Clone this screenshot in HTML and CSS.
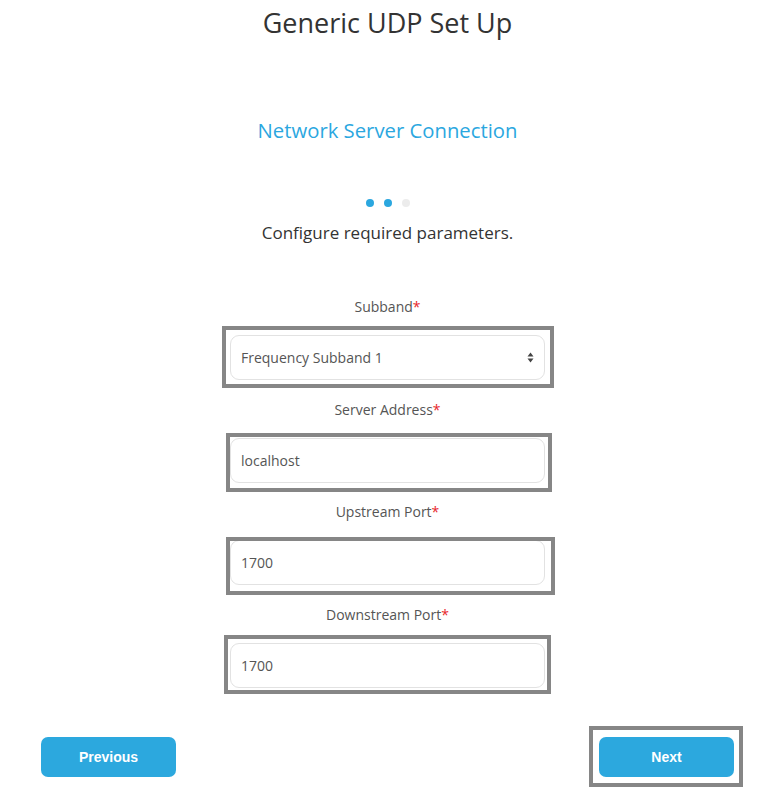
FILE: index.html
```html
<!DOCTYPE html>
<html>
<head>
<meta charset="utf-8">
<link rel="stylesheet" href="styles.css">
</head>
<body>
<div class="page">
  <h1 class="title">Generic UDP Set Up</h1>
  <h2 class="subtitle">Network Server Connection</h2>
  <div class="dots">
    <span class="dot on"></span>
    <span class="dot on"></span>
    <span class="dot"></span>
  </div>
  <p class="intro">Configure required parameters.</p>

  <form class="form">
    <div class="field">
      <label class="label">Subband<span class="req">*</span></label>
      <div class="select">
        <span>Frequency Subband 1</span>
        <svg class="arrows" width="7" height="11" viewBox="0 0 7 11"><path d="M3.5 0.5 L6.5 4.5 H0.5 Z M3.5 10.5 L6.5 6.5 H0.5 Z" fill="#444"/></svg>
      </div>
      <div class="hl hl-1"></div>
    </div>
    <div class="field">
      <label class="label">Server Address<span class="req">*</span></label>
      <div class="input">localhost</div>
      <div class="hl hl-2"></div>
    </div>
    <div class="field">
      <label class="label">Upstream Port<span class="req">*</span></label>
      <div class="input">1700</div>
      <div class="hl hl-3"></div>
    </div>
    <div class="field">
      <label class="label">Downstream Port<span class="req">*</span></label>
      <div class="input">1700</div>
      <div class="hl hl-4"></div>
    </div>
  </form>

  <div class="actions">
    <button class="btn" type="button">Previous</button>
    <div class="btn-wrap">
      <button class="btn" type="button">Next</button>
      <div class="hl hl-btn"></div>
    </div>
  </div>
</div>
</body>
</html>
```
FILE: styles.css
```css
* { box-sizing: border-box; }
html, body { margin: 0; padding: 0; background: #fff; }
body { font-family: "Segoe UI", "Open Sans", "Noto Sans", sans-serif; color: #333; min-height: 811px; }

.page {
  width: 755px;
  margin-left: 10px;
  padding-bottom: 20px;
  display: flex;
  flex-direction: column;
  align-items: center;
}

.title {
  margin: 0;
  padding-top: 3px;
  font-size: 27px;
  font-weight: 400;
  line-height: 40px;
  color: #333;
}

.subtitle {
  margin: 72px 0 0;
  font-size: 20.3px;
  font-weight: 400;
  line-height: 30px;
  color: #2ba7df;
}

.dots {
  margin-top: 54px;
  display: flex;
  gap: 10px;
  height: 8px;
}
.dot { width: 8px; height: 8px; border-radius: 50%; background: #ececec; }
.dot.on { background: #2ba7df; }

.intro {
  margin: 13px 0 0;
  font-size: 17px;
  line-height: 26px;
  color: #333;
}

.form {
  margin-top: 51px;
  width: 315px;
  display: flex;
  flex-direction: column;
  gap: 19.5px;
}

.field {
  position: relative;
  display: flex;
  flex-direction: column;
  align-items: center;
  gap: 18px;
}

.label {
  font-size: 14px;
  line-height: 20px;
  color: #555;
}
.req { color: #e8262a; }

.select, .input {
  width: 100%;
  height: 45px;
  border: 1px solid #e2e2e2;
  border-radius: 9px;
  padding: 0 10px;
  display: flex;
  align-items: center;
  font-size: 14px;
  color: #555;
  background: #fff;
}
.select { justify-content: space-between; }

.hl {
  position: absolute;
  border: 4px solid #868686;
  pointer-events: none;
}
.hl-1 { left: -8px; right: -9px; top: 29px; bottom: -8px; }
.hl-2 { left: -4px; right: -7px; top: 33px; bottom: -9px; }
.hl-3 { left: -4px; right: -10px; top: 35px; bottom: -10px; }
.hl-4 { left: -6px; right: -6px; top: 30px; bottom: -6px; }

.actions {
  margin-top: 49px;
  width: 693px;
  display: flex;
  justify-content: space-between;
}

.btn {
  width: 135px;
  height: 40px;
  border: 0;
  border-radius: 7px;
  background: #2ca8de;
  color: #fff;
  font-family: "Liberation Sans", Arial, sans-serif;
  font-size: 14px;
  font-weight: 700;
  padding: 0;
}

.btn-wrap { position: relative; display: flex; }
.hl-btn { left: -10px; right: -9px; top: -11px; bottom: -10px; }
```
